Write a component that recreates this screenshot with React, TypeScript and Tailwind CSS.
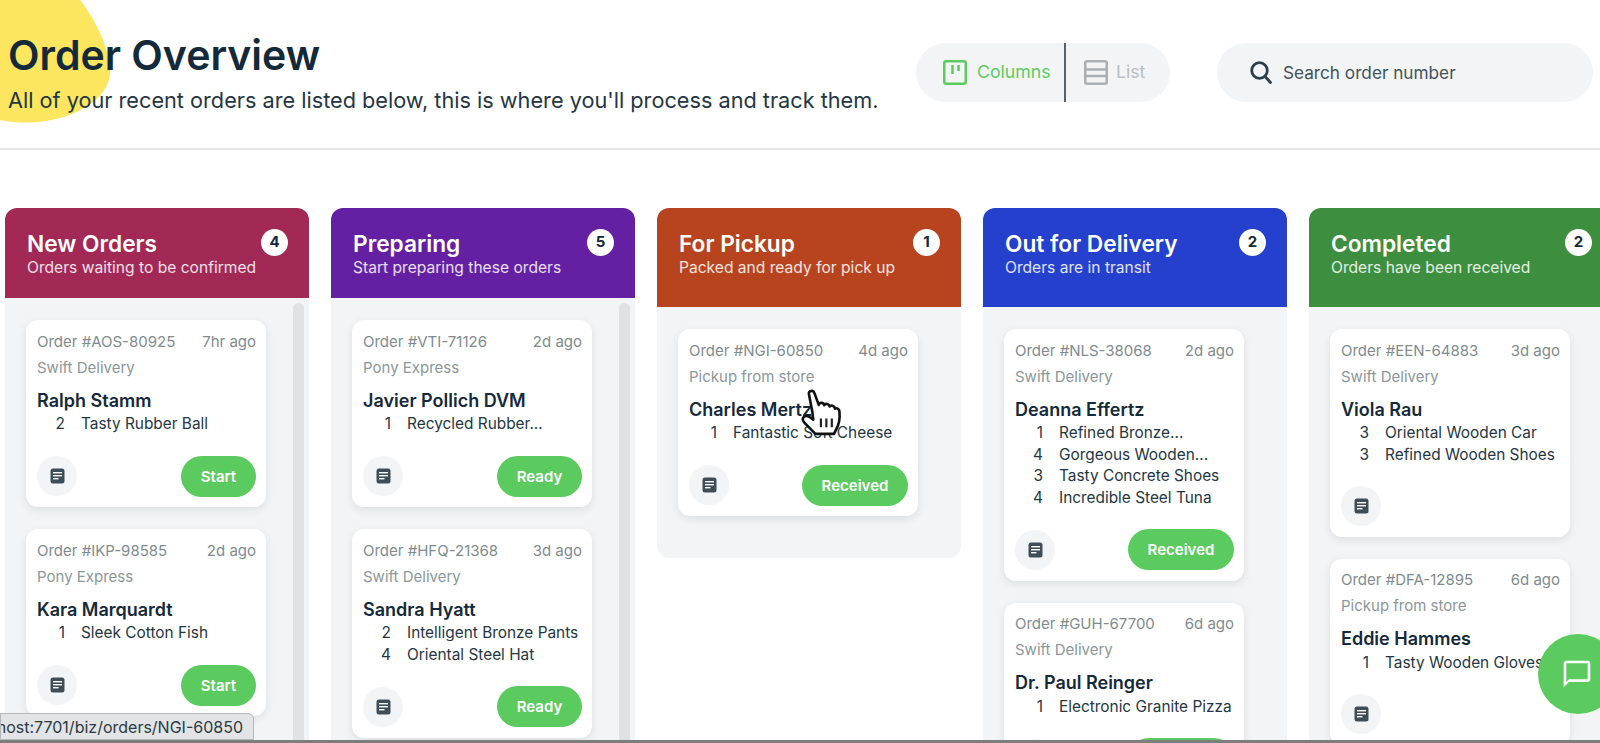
import React from 'react';

interface Order {
  id: string;
  age: string;
  method: string;
  name: string;
  items: [number, string][];
  action?: string;
  actionWidth?: string;
}

interface Column {
  title: string;
  subtitle: string;
  count: number;
  headerClass: string;
  hasScrollbar?: boolean;
  wrapClass?: string;
  orders: Order[];
}

const columns: Column[] = [
  {
    title: 'New Orders',
    subtitle: 'Orders waiting to be confirmed',
    count: 4,
    headerClass: 'bg-[#a22856] h-[90px]',
    hasScrollbar: true,
    orders: [
      { id: 'AOS-80925', age: '7hr ago', method: 'Swift Delivery', name: 'Ralph Stamm', items: [[2, 'Tasty Rubber Ball']], action: 'Start', actionWidth: 'w-[75px]' },
      { id: 'IKP-98585', age: '2d ago', method: 'Pony Express', name: 'Kara Marquardt', items: [[1, 'Sleek Cotton Fish']], action: 'Start', actionWidth: 'w-[75px]' },
    ],
  },
  {
    title: 'Preparing',
    subtitle: 'Start preparing these orders',
    count: 5,
    headerClass: 'bg-[#651fa3] h-[90px]',
    hasScrollbar: true,
    orders: [
      { id: 'VTI-71126', age: '2d ago', method: 'Pony Express', name: 'Javier Pollich DVM', items: [[1, 'Recycled Rubber...']], action: 'Ready', actionWidth: 'w-[85px]' },
      { id: 'HFQ-21368', age: '3d ago', method: 'Swift Delivery', name: 'Sandra Hyatt', items: [[2, 'Intelligent Bronze Pants'], [4, 'Oriental Steel Hat']], action: 'Ready', actionWidth: 'w-[85px]' },
    ],
  },
  {
    title: 'For Pickup',
    subtitle: 'Packed and ready for pick up',
    count: 1,
    headerClass: 'bg-[#b8441f] h-[99px]',
    wrapClass: 'h-[251px] rounded-b-xl',
    orders: [
      { id: 'NGI-60850', age: '4d ago', method: 'Pickup from store', name: 'Charles Mertz', items: [[1, 'Fantastic Soft Cheese']], action: 'Received', actionWidth: 'w-[106px]' },
    ],
  },
  {
    title: 'Out for Delivery',
    subtitle: 'Orders are in transit',
    count: 2,
    headerClass: 'bg-[#2440cc] h-[99px]',
    orders: [
      { id: 'NLS-38068', age: '2d ago', method: 'Swift Delivery', name: 'Deanna Effertz', items: [[1, 'Refined Bronze...'], [4, 'Gorgeous Wooden...'], [3, 'Tasty Concrete Shoes'], [4, 'Incredible Steel Tuna']], action: 'Received', actionWidth: 'w-[106px]' },
      { id: 'GUH-67700', age: '6d ago', method: 'Swift Delivery', name: 'Dr. Paul Reinger', items: [[1, 'Electronic Granite Pizza']], action: 'Received', actionWidth: 'w-[106px]' },
    ],
  },
  {
    title: 'Completed',
    subtitle: 'Orders have been received',
    count: 2,
    headerClass: 'bg-[#3d8f3f] h-[99px]',
    orders: [
      { id: 'EEN-64883', age: '3d ago', method: 'Swift Delivery', name: 'Viola Rau', items: [[3, 'Oriental Wooden Car'], [3, 'Refined Wooden Shoes']] },
      { id: 'DFA-12895', age: '6d ago', method: 'Pickup from store', name: 'Eddie Hammes', items: [[1, 'Tasty Wooden Gloves']] },
    ],
  },
];

const NoteIcon = () => (
  <svg width="15" height="16" viewBox="0 0 15 16">
    <rect x="0.5" y="0.5" width="14" height="15" rx="2.5" fill="#3e4e58" />
    <rect x="3" y="4" width="9" height="1.4" fill="#fff" />
    <rect x="3" y="7" width="9" height="1.4" fill="#fff" />
    <rect x="3" y="10" width="5.5" height="1.4" fill="#fff" />
  </svg>
);

const OrderCard = ({ order }: { order: Order }) => (
  <div className="w-[240px] shrink-0 rounded-xl bg-white pl-[11px] pr-[10px] pt-[9px] pb-[10.5px] shadow-[0_3px_10px_rgba(0,0,0,0.09)]">
    <div className="flex h-[26px] items-center justify-between text-[15px] text-[#7f8b8f]">
      <span>Order #{order.id}</span>
      <span>{order.age}</span>
    </div>
    <div className="flex h-[26px] items-center text-[15px] text-[#8c979a]">{order.method}</div>
    <div className="mt-[6px] flex h-[26px] items-center text-[18px] font-semibold text-[#14293a]">{order.name}</div>
    {order.items.map(([qty, label]) => (
      <div key={label} className="flex h-[21.5px] items-center whitespace-nowrap text-[15.4px] text-[#243644]">
        <span className="w-[28px] shrink-0 text-right">{qty}</span>
        <span className="ml-[16px]">{label}</span>
      </div>
    ))}
    <div className="mt-[21px] flex items-center justify-between">
      <div className="flex h-[40px] w-[40px] items-center justify-center rounded-full bg-[#f3f4f6]">
        <NoteIcon />
      </div>
      {order.action && (
        <button className={`h-[41px] rounded-full bg-[#5ccb5f] pt-[2px] text-[15px] font-semibold text-white ${order.actionWidth}`}>
          {order.action}
        </button>
      )}
    </div>
  </div>
);

const BoardColumn = ({ column }: { column: Column }) => (
  <div className="flex w-[304px] shrink-0 flex-col">
    <div className={`relative shrink-0 rounded-t-xl pl-[22px] pt-[23px] text-white ${column.headerClass}`}>
      <div className="text-[22.7px] font-semibold leading-[26px]">{column.title}</div>
      <div className="text-[15.6px] leading-[22px] text-white/85">{column.subtitle}</div>
      <div className="absolute right-[21px] top-[21px] flex h-[27px] w-[27px] items-center justify-center rounded-full bg-white text-[15px] font-bold text-[#14293a]">
        {column.count}
      </div>
    </div>
    <div className={`relative flex flex-col gap-[22px] bg-[#f3f4f6] pl-[21px] pt-[22px] ${column.wrapClass ?? 'flex-1'}`}>
      {column.hasScrollbar && (
        <div className="absolute right-[5px] top-[5px] bottom-0 w-[11px] rounded-t-md bg-[#dfe1e3]" />
      )}
      {column.orders.map((order) => (
        <OrderCard key={order.id} order={order} />
      ))}
    </div>
  </div>
);

export default function App() {
  return (
    <div className="relative flex h-screen flex-col overflow-hidden bg-white font-['Inter',sans-serif] text-[#14293a]">
      <svg className="absolute left-0 top-0" width="112" height="124" viewBox="0 0 112 124">
        <path d="M0 0H80C96 20 110 50 110 72C110 100 70 122 29 122.5C18 122.5 8 122 0 120Z" fill="#fce55f" />
      </svg>

      <header className="relative flex h-[150px] shrink-0 justify-between border-b-2 border-[#e5e5e5] pl-[8px] pr-[7px]">
        <div className="pt-[30px]">
          <h1 className="text-[41px] font-semibold leading-[50px] text-[#14293a]">Order Overview</h1>
          <p className="mt-[7px] text-[21.7px] leading-[27px] text-[#243644]">All of your recent orders are listed below, this is where you'll process and track them.</p>
        </div>
        <div className="flex items-start gap-[47px] pt-[43px]">
          <div className="flex h-[59px] w-[254px] items-center rounded-full bg-[#f3f4f6]">
            <div className="flex h-full w-[150px] items-center gap-[10px] border-r-2 border-[#56636b] pl-[27px] text-[17.7px] text-[#5ccb5f]">
              <svg width="24" height="25" viewBox="0 0 24 25" fill="none" stroke="#5ccb5f" strokeWidth="2.5">
                <rect x="1.25" y="1.25" width="21.5" height="22.5" rx="2" />
                <path d="M9.5 5V14M15.5 5V11" />
              </svg>
              <span>Columns</span>
            </div>
            <div className="flex items-center gap-[8px] pl-[18px] text-[17.7px] text-[#b9bfc3]">
              <svg width="24" height="25" viewBox="0 0 24 25" fill="none" stroke="#a9afb3" strokeWidth="2.5">
                <rect x="1.25" y="1.25" width="21.5" height="22.5" rx="2" />
                <path d="M1 9.5H23M1 16H23" />
              </svg>
              <span>List</span>
            </div>
          </div>
          <div className="flex h-[59px] w-[376px] items-center gap-[11px] rounded-full bg-[#f3f4f6] pl-[33px] text-[17.2px] text-[#43525c]">
            <svg width="22" height="23" viewBox="0 0 22 23" fill="none" stroke="#2c3f4c" strokeWidth="2.8" strokeLinecap="round">
              <circle cx="9.5" cy="9.5" r="7.8" />
              <path d="M15.5 16L20.5 21.5" />
            </svg>
            <span>Search order number</span>
          </div>
        </div>
      </header>

      <main className="flex min-h-0 flex-1 gap-[22px] pl-[5px] pt-[58px]">
        {columns.map((column) => (
          <BoardColumn key={column.title} column={column} />
        ))}
      </main>

      {/* hand cursor over the pickup card */}
      <svg className="absolute left-[799px] top-[388px]" width="46" height="48" viewBox="0 0 42 44">
        <path
          d="M12 21L9 5.5C8.6 2.5 13 1.5 14 4.5L18 15.5C18.3 13 22.5 13 23 15.8C23.7 13.8 27.5 14.2 28 17C29 15.3 32.6 16 33 19C34.2 18 36.8 18.8 37 21.5C37.5 27 37 33 34 38L32 42H15L5 32C3 29.5 2.5 27.5 5 26C7 25 10 26.5 13 29Z"
          fill="#fff"
          stroke="#111"
          strokeWidth="2.4"
          strokeLinejoin="round"
        />
        <path d="M20 28V36M25 28V36M30 28V36" stroke="#222" strokeWidth="2" />
      </svg>

      {/* chat button */}
      <div className="absolute left-[1538px] top-[634px] flex h-[80px] w-[80px] items-center pl-[23px] rounded-full bg-[#5ccb5f]">
        <svg width="32" height="32" viewBox="0 0 24 24" fill="#fff">
          <path d="M20 2H4c-1.1 0-2 .9-2 2v18l4-4h14c1.1 0 2-.9 2-2V4c0-1.1-.9-2-2-2zm0 14H6l-2 2V4h16v12z" />
        </svg>
      </div>

      {/* browser status bubble */}
      <div className="absolute bottom-[3px] left-0 flex h-[27px] w-[254px] items-center justify-end overflow-hidden whitespace-nowrap rounded-tr-md border border-[#b4b6b8] bg-[#e2e4e6] pr-[10px] text-[16px] text-[#2b3a44]">
        host:7701/biz/orders/NGI-60850
      </div>
      <div className="absolute inset-x-0 bottom-0 h-[3px] bg-[#7d7d7d]" />
    </div>
  );
}
